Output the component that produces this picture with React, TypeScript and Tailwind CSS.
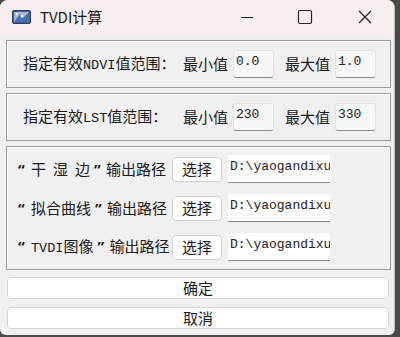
import React from 'react';

const cjk = { fontFamily: '"Noto Sans CJK SC", "Noto Sans", sans-serif' };
const mono = { fontFamily: '"Liberation Mono", "Noto Sans CJK SC", monospace' };
const latin = { fontFamily: '"Noto Sans", sans-serif' };

const M: React.FC<{ children: React.ReactNode }> = ({ children }) => (
  <span className="text-[13.5px]" style={mono}>
    {children}
  </span>
);

const LQ = () => (
  <span className="inline-block w-[13px] text-left font-bold" style={latin}>
    “
  </span>
);
const RQ = () => (
  <span className="inline-block w-[16px] pl-[4px] text-left font-bold" style={latin}>
    ”
  </span>
);
const Gap = () => <span className="inline-block w-[7px]" />;

const RangeInput: React.FC<{ value: string }> = ({ value }) => (
  <div
    className="w-[41px] h-[28px] bg-[#f7f7f7] border border-[#e2e2e2] border-b-[#8c8c8c] rounded-[3px] pl-[2px] pt-[2px] text-[13px] leading-[18px] text-[#222]"
    style={mono}
  >
    {value}
  </div>
);

const RangeBox: React.FC<{ label: React.ReactNode; min: string; max: string }> = ({ label, min, max }) => (
  <div className="h-[48px] border border-[#9c9c9c] shadow-[inset_1px_1px_0_#fff] flex items-center pl-[16px]">
    <div className="w-[160px] text-[15px] text-[#1a1a1a] whitespace-pre">{label}</div>
    <span className="w-[50px] text-[15px] text-[#1a1a1a]">最小值</span>
    <RangeInput value={min} />
    <span className="ml-[11px] w-[50px] text-[15px] text-[#1a1a1a]">最大值</span>
    <RangeInput value={max} />
  </div>
);

const PathRow: React.FC<{ label: React.ReactNode }> = ({ label }) => (
  <div className="flex items-center h-[28px]">
    <div className="w-[154px] text-[15px] text-[#1a1a1a] whitespace-nowrap">{label}</div>
    <button className="w-[50px] h-[25px] bg-white border border-[#d0d0d0] rounded-[4px] text-[15px] text-[#1a1a1a] flex items-center justify-center">
      选择
    </button>
    <div
      className="ml-[6px] w-[102px] h-[28px] bg-white border-b border-[#8c8c8c] pl-[2px] pt-[3px] text-[13px] leading-[18px] text-[#222] overflow-hidden whitespace-nowrap"
      style={mono}
    >
      D:\yaogandixu
    </div>
  </div>
);

export default function App() {
  return (
    <div lang="zh-CN" className="w-[400px] h-[337px] bg-[#4a4a4a] overflow-hidden" style={cjk}>
      <div className="w-[395px] h-[335px] bg-[#f0f0f0] rounded-t-[8px] rounded-b-[6px] flex flex-col overflow-hidden border-r border-[#bdbdbd]">
        {/* title bar */}
        <div className="h-[34px] bg-[#f9efee] flex items-center shrink-0">
          <svg width="19" height="14" viewBox="0 0 19 14" className="ml-[12px]">
            <rect x="0.5" y="0.5" width="18" height="13" rx="1.5" fill="#3f5f96" stroke="#2e3f5e" />
            <rect x="2" y="2" width="15" height="10" fill="#9fb8dc" />
            <path d="M2 12 L8 4 L11 8 L17 2 L17 12 Z" fill="#4a6fb0" />
            <circle cx="10" cy="6" r="1.6" fill="#eef2fa" />
            <circle cx="5" cy="4" r="1.2" fill="#eef2fa" />
          </svg>
          <span className="ml-[9px] text-[15px] text-[#1a1a1a]">TVDI计算</span>
          <div className="ml-auto flex items-center">
            <svg width="16" height="16" viewBox="0 0 16 16" className="mr-[42px]">
              <path d="M2 8.5 H14" stroke="#222" strokeWidth="1" />
            </svg>
            <svg width="16" height="16" viewBox="0 0 16 16" className="mr-[44px]">
              <rect x="1.5" y="1.5" width="13" height="13" rx="1.5" stroke="#222" strokeWidth="1.2" fill="none" />
            </svg>
            <svg width="16" height="16" viewBox="0 0 16 16" className="mr-[21px]">
              <path d="M2 2 L14 14 M14 2 L2 14" stroke="#222" strokeWidth="1.2" />
            </svg>
          </div>
        </div>

        {/* body */}
        <div className="pl-[6px] pr-[3px] pt-[6px] flex flex-col">
          <RangeBox label={<>指定有效<M>NDVI</M>值范围： </>} min="0.0" max="1.0" />
          <div className="h-[5px]" />
          <RangeBox label={<>指定有效<M>LST</M>值范围： </>} min="230" max="330" />
          <div className="h-[5px]" />
          <div className="h-[124px] border border-[#9c9c9c] shadow-[inset_1px_1px_0_#fff] flex flex-col pl-[11px] pt-[8px] gap-[11px]">
            <PathRow label={<><LQ />干<Gap />湿<Gap />边<RQ />输出路径</>} />
            <PathRow label={<><LQ />拟合曲线<RQ />输出路径</>} />
            <PathRow label={<><LQ /><M>TVDI</M>图像<RQ />输出路径</>} />
          </div>
        </div>
        <div className="pl-[7px] pr-[5px] pt-[7px] flex flex-col gap-[8px]">
          <button className="h-[22px] bg-white border border-[#d6d6d6] rounded-[4px] text-[15px] text-[#1a1a1a] flex items-center justify-center">
            确定
          </button>
          <button className="h-[22px] bg-white border border-[#d6d6d6] rounded-[4px] text-[15px] text-[#1a1a1a] flex items-center justify-center">
            取消
          </button>
        </div>
      </div>
    </div>
  );
}
